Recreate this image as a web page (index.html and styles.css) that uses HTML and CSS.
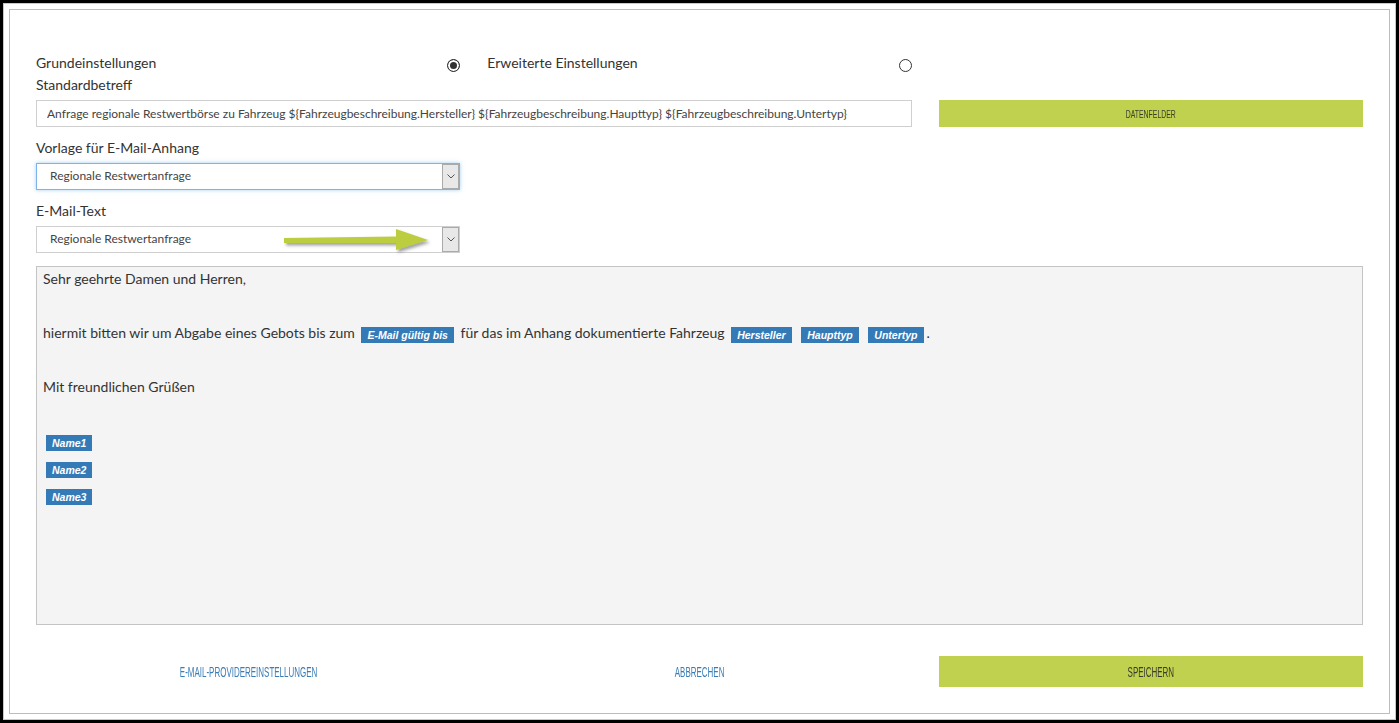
FILE: index.html
```html
<!DOCTYPE html>
<html lang="de">
<head>
    <meta charset="UTF-8">
    <meta name="viewport" content="width=device-width, initial-scale=1.0">
    <title>E-Mail Einstellungen</title>
    <link rel="stylesheet" href="styles.css">
</head>
<body>
<div class="window">
    <div class="shell">
        <form class="frame" id="mailForm">

            <div class="radio-cell">
                <span>Grundeinstellungen</span>
                <input type="radio" name="modus" value="basis" checked>
            </div>
            <div class="radio-cell">
                <span>Erweiterte Einstellungen</span>
                <input type="radio" name="modus" value="erweitert">
            </div>
            <div></div>

            <label class="field-label" for="betreff">Standardbetreff</label>
            <input class="subject" type="text" id="betreff" value="Anfrage regionale Restwertbörse zu Fahrzeug ${Fahrzeugbeschreibung.Hersteller} ${Fahrzeugbeschreibung.Haupttyp} ${Fahrzeugbeschreibung.Untertyp}">
            <button type="button" class="btn-green btn-small"><span class="cond">DATENFELDER</span></button>

            <label class="field-label gap-top" for="vorlage">Vorlage für E-Mail-Anhang</label>
            <div class="select focused">
                <select id="vorlage">
                    <option>Regionale Restwertanfrage</option>
                </select>
                <span class="caret"><svg width="8" height="5" viewBox="0 0 8 5"><path d="M0.5 0.5 L4 4 L7.5 0.5" fill="none" stroke="#555" stroke-width="1"/></svg></span>
            </div>

            <label class="field-label gap-top" for="mailtext">E-Mail-Text</label>
            <div class="select">
                <select id="mailtext">
                    <option>Regionale Restwertanfrage</option>
                </select>
                <span class="caret"><svg width="8" height="5" viewBox="0 0 8 5"><path d="M0.5 0.5 L4 4 L7.5 0.5" fill="none" stroke="#555" stroke-width="1"/></svg></span>
                <!-- Hinweispfeil aus dem Screenshot -->
                <svg class="hint-arrow" width="152" height="30" viewBox="0 0 152 30">
                    <defs>
                        <filter id="schatten" x="-10%" y="-30%" width="130%" height="180%">
                            <feDropShadow dx="2" dy="2.5" stdDeviation="1.4" flood-color="#555" flood-opacity="0.55"/>
                        </filter>
                    </defs>
                    <polygon points="2,11 114,9.5 114,2 146,13 114,23 114,16 2,16" fill="#bccd3f" filter="url(#schatten)"/>
                </svg>
            </div>

            <div class="editor" contenteditable="true">
                <p>Sehr geehrte Damen und Herren,</p>
                <p><br></p>
                <p>hiermit bitten wir um Abgabe eines Gebots bis zum <span class="tag">E-Mail gültig bis</span> für das im Anhang dokumentierte Fahrzeug <span class="tag">Hersteller</span> <span class="tag">Haupttyp</span> <span class="tag">Untertyp</span>.</p>
                <p><br></p>
                <p>Mit freundlichen Grüßen</p>
                <p><br></p>
                <p><span class="tag">Name1</span></p>
                <p><span class="tag">Name2</span></p>
                <p><span class="tag">Name3</span></p>
            </div>

            <button type="button" class="btn-link bottom"><span class="cond">E-MAIL-PROVIDEREINSTELLUNGEN</span></button>
            <button type="button" class="btn-link bottom"><span class="cond">ABBRECHEN</span></button>
            <button type="submit" class="btn-green bottom"><span class="cond">SPEICHERN</span></button>

        </form>
    </div>
</div>
</body>
</html>
```

FILE: styles.css
```css
* {
    box-sizing: border-box;
}
body {
    margin: 0;
    font-family: Lato, "Noto Sans", sans-serif;
    color: #333;
    background: #000;
}
.window {
    height: 723px;
    border: 3px solid #000;
    background: #fff;
}
.shell {
    height: 100%;
    border: 1px solid #c8c8c8;
    padding: 5px;
}
.frame {
    height: 100%;
    margin: 0;
    border: 1px solid #bfd14e;
    padding: 43px 26px 0;
    display: grid;
    grid-template-columns: repeat(3, 1fr);
    column-gap: 27px;
    align-content: start;
}
.radio-cell {
    display: flex;
    justify-content: space-between;
    align-items: center;
    height: 20px;
    font-size: 14px;
    position: relative;
    top: -1px;
}
.radio-cell input {
    appearance: none;
    width: 13px;
    height: 13px;
    margin: 0;
    border: 1px solid #333;
    border-radius: 50%;
    position: relative;
    top: 3px;
    background: #fff;
}
.radio-cell input:checked {
    background: #333;
    box-shadow: inset 0 0 0 2px #fff;
}
.field-label {
    grid-column: 1 / -1;
    margin-top: 2px;
    line-height: 20px;
    font-size: 14px;
}
.gap-top {
    margin-top: 11px;
}
.subject {
    grid-column: span 2;
    margin-top: 5px;
    height: 27px;
    border: 1px solid #cfcfcf;
    padding: 0 10px;
    font: 12px Lato, "Noto Sans", sans-serif;
    color: #444;
    outline: none;
}
.btn-green {
    background: #bfd14e;
    border: none;
    color: #3a3d2c;
    padding: 0;
    cursor: pointer;
}
.btn-small {
    margin-top: 5px;
    height: 27px;
}
.btn-small .cond {
    font-size: 11.5px;
    transform: scaleX(0.6);
}
.cond {
    display: inline-block;
    font-family: "Liberation Sans", Arial, sans-serif;
    font-size: 14px;
    transform: scaleX(0.57);
    white-space: nowrap;
}
.select {
    position: relative;
    grid-column: 1;
    margin-top: 5px;
    height: 27px;
    border: 1px solid #cfcfcf;
    background: #fff;
}
.select.focused {
    border-color: #7db3e8;
    box-shadow: 0 0 4px rgba(102, 175, 233, 0.6);
}
.select select {
    appearance: none;
    width: 100%;
    height: 100%;
    border: none;
    background: transparent;
    padding: 0 13px 2px;
    font: 12px Lato, "Noto Sans", sans-serif;
    color: #444;
    outline: none;
}
.caret {
    position: absolute;
    top: 0;
    right: 0;
    bottom: 0;
    width: 17px;
    background: #e8e8e8;
    border: 1px solid #aaa;
    display: flex;
    align-items: center;
    justify-content: center;
}
.hint-arrow {
    position: absolute;
    left: 245px;
    top: 0;
}
.editor {
    grid-column: 1 / -1;
    margin-top: 13px;
    height: 359px;
    border: 1px solid #c4c4c4;
    background: #f4f4f4;
    padding: 0 6px;
    font-size: 14px;
    line-height: 27px;
    outline: none;
}
.editor p {
    margin: 0;
}
.editor p:first-child {
    margin-top: -2px;
}
.tag {
    display: inline-block;
    background: #337ab7;
    color: #fff;
    font: italic bold 10.5px "Liberation Sans", Arial, sans-serif;
    line-height: 16px;
    padding: 0 6px;
    margin: 0 3px;
    vertical-align: -1px;
}
.bottom {
    margin-top: 31px;
    height: 31px;
}
.btn-link {
    background: none;
    border: none;
    color: #3a7db5;
    padding: 0;
    cursor: pointer;
}
```
